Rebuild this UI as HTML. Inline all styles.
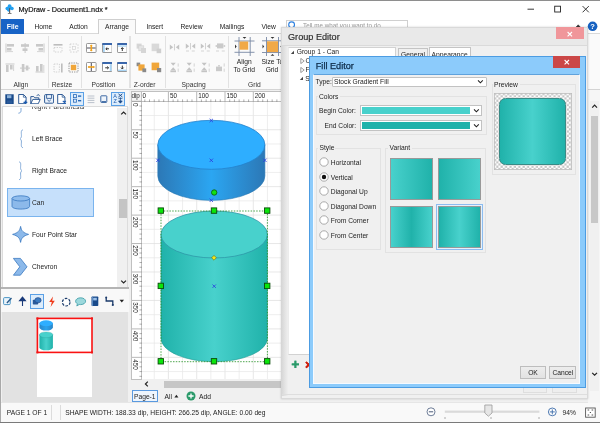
<!DOCTYPE html>
<html><head><meta charset="utf-8"><title>MyDraw</title>
<style>
html,body{margin:0;padding:0;overflow:hidden;}
body{width:600px;height:423px;overflow:hidden;background:#fff;font-family:"Liberation Sans",sans-serif;position:relative;}
div,span,svg{position:absolute;box-sizing:border-box;}
.t{white-space:nowrap;line-height:10px;height:10px;}
#w{left:0;top:0;width:600px;height:423px;overflow:hidden;will-change:transform;opacity:0.999;}
</style></head><body><div id="w">

<div style="left:0px;top:0px;width:600px;height:423px;background:#fff;"></div>
<svg style="left:5.200px;top:3.800px" width="9.200" height="10" viewBox="0 0 11 12">
<circle cx="5.5" cy="2.6" r="2.3" fill="#22a0f0"/><circle cx="2.6" cy="5.4" r="2.1" fill="#22a0f0"/><circle cx="8.4" cy="5.4" r="2.1" fill="#22a0f0"/><circle cx="4.3" cy="7.6" r="1.6" fill="#22a0f0"/><circle cx="5.5" cy="5" r="2" fill="#22a0f0"/>
<rect x="4.900" y="5" width="1.300" height="6" fill="#555"/><rect x="3.400" y="10.800" width="4.400" height="1" fill="#666"/></svg>
<span class="t" style="left:18.5px;top:4.500000000000001px;font-size:7.3px;color:#1a1a1a;-webkit-text-stroke:0.200px #1a1a1a;">MyDraw - Document1.ndx *</span>
<svg style="left:520px;top:0" width="80" height="19" viewBox="0 0 80 19">
<path d="M7.5 9.2h6.5" stroke="#222" stroke-width="0.9" fill="none"/>
<rect x="34.7" y="6.2" width="5.8" height="5.8" stroke="#222" stroke-width="0.9" fill="none"/>
<path d="M62.6 6.1l6.2 6.2M68.8 6.1l-6.2 6.2" stroke="#222" stroke-width="0.9" fill="none"/>
</svg>
<div style="left:1px;top:19px;width:599px;height:15px;background:#fff;"></div>
<div style="left:1px;top:33.4px;width:599px;height:1px;background:#d9d9d9;"></div>
<div style="left:1px;top:19px;width:23.2px;height:15px;background:#1763c6;"></div>
<span class="t" style="left:-87.4px;width:200px;text-align:center;top:22.3px;font-size:6.9px;color:#fff;font-weight:bold;">File</span>
<span class="t" style="left:-56.7px;width:200px;text-align:center;top:22.3px;font-size:6.7px;color:#222;">Home</span>
<span class="t" style="left:-21.5px;width:200px;text-align:center;top:22.3px;font-size:6.7px;color:#222;">Action</span>
<span class="t" style="left:54.80000000000001px;width:200px;text-align:center;top:22.3px;font-size:6.7px;color:#222;">Insert</span>
<span class="t" style="left:91.5px;width:200px;text-align:center;top:22.3px;font-size:6.7px;color:#222;">Review</span>
<span class="t" style="left:132px;width:200px;text-align:center;top:22.3px;font-size:6.7px;color:#222;">Mailings</span>
<span class="t" style="left:168.60000000000002px;width:200px;text-align:center;top:22.3px;font-size:6.7px;color:#222;">View</span>
<div style="left:98.3px;top:19.2px;width:37.6px;height:15.2px;background:#fafafa;border:1px solid #cfcfcf;border-bottom:none;"></div>
<span class="t" style="left:17px;width:200px;text-align:center;top:22.3px;font-size:6.7px;color:#222;">Arrange</span>
<svg style="left:572px;top:20px" width="28" height="14" viewBox="0 0 28 14">
<path d="M4.200 7l2-2.200 2 2.200z" fill="#333" stroke="#333" stroke-width="0.600"/>
<circle cx="20.6" cy="6.3" r="4.8" fill="#1560c0"/>
<text x="20.6" y="9" font-size="7.5" font-weight="bold" fill="#fff" text-anchor="middle" font-family="Liberation Sans">?</text>
</svg>
<div style="left:286px;top:19.6px;width:122px;height:12px;border:1px solid #d0d0d0;background:#fff;"></div>
<svg style="left:287px;top:19px" width="12" height="12" viewBox="0 0 12 12"><circle cx="4.600" cy="5.800" r="2.900" stroke="#2a7fe0" stroke-width="1.100" fill="none"/></svg>
<span class="t" style="left:303px;top:21.3px;font-size:6.3px;color:#999;">Tell me what you want to do...</span>
<div style="left:1px;top:34.4px;width:599px;height:55.3px;background:#fafafa;"></div>
<div style="left:1px;top:89.2px;width:599px;height:1px;background:#d4d4d4;"></div>
<div style="left:47.5px;top:36px;width:1.4px;height:52px;background:#e2e2e2;"></div>
<div style="left:81.1px;top:36px;width:1.4px;height:52px;background:#e2e2e2;"></div>
<div style="left:129.3px;top:36px;width:1.4px;height:52px;background:#e2e2e2;"></div>
<div style="left:164.9px;top:36px;width:1.4px;height:52px;background:#e2e2e2;"></div>
<div style="left:227.9px;top:36px;width:1.4px;height:52px;background:#e2e2e2;"></div>
<span class="t" style="left:-79.2px;width:200px;text-align:center;top:79.9px;font-size:6.7px;color:#333;">Align</span>
<span class="t" style="left:-38px;width:200px;text-align:center;top:79.9px;font-size:6.7px;color:#333;">Resize</span>
<span class="t" style="left:3.5px;width:200px;text-align:center;top:79.9px;font-size:6.7px;color:#333;">Position</span>
<span class="t" style="left:44.599999999999994px;width:200px;text-align:center;top:79.9px;font-size:6.7px;color:#333;">Z-order</span>
<span class="t" style="left:93.69999999999999px;width:200px;text-align:center;top:79.9px;font-size:6.7px;color:#333;">Spacing</span>
<span class="t" style="left:154.3px;width:200px;text-align:center;top:79.9px;font-size:6.7px;color:#333;">Grid</span>
<svg style="left:4.6px;top:42.6px" width="10" height="10" viewBox="0 0 10 10" preserveAspectRatio="none"><rect x="0.5" y="0.5" width="1" height="9" fill="#c9c9c9"/><rect x="2" y="1" width="7" height="2.6" fill="#c9c9c9"/><rect x="2" y="5" width="4.5" height="2.6" fill="#c9c9c9"/><path d="M2 8.6h6" stroke="#c9c9c9" stroke-width="0.8"/></svg>
<svg style="left:4.6px;top:62.8px" width="10" height="10" viewBox="0 0 10 10" preserveAspectRatio="none"><rect x="0.5" y="0.5" width="9" height="1" fill="#c9c9c9"/><rect x="1" y="2" width="2.6" height="7" fill="#c9c9c9"/><rect x="5" y="2" width="2.6" height="4.5" fill="#c9c9c9"/><path d="M8.6 2v6" stroke="#c9c9c9" stroke-width="0.8"/></svg>
<svg style="left:19.8px;top:42.6px" width="10" height="10" viewBox="0 0 10 10" preserveAspectRatio="none"><rect x="4.6" y="0" width="1" height="10" fill="#c9c9c9"/><rect x="1" y="1.2" width="8" height="2.6" fill="#c9c9c9"/><rect x="2.5" y="5.4" width="5" height="2.6" fill="#c9c9c9"/></svg>
<svg style="left:19.8px;top:62.8px" width="10" height="10" viewBox="0 0 10 10" preserveAspectRatio="none"><rect x="0" y="4.6" width="10" height="1" fill="#c9c9c9"/><rect x="1.8" y="1" width="2.6" height="8" fill="#c9c9c9"/><rect x="5.8" y="2.5" width="2.6" height="5" fill="#c9c9c9"/></svg>
<svg style="left:35.2px;top:42.6px" width="10" height="10" viewBox="0 0 10 10" preserveAspectRatio="none"><rect x="8.5" y="0.5" width="1" height="9" fill="#c9c9c9"/><rect x="1" y="1" width="7" height="2.6" fill="#c9c9c9"/><rect x="3.5" y="5" width="4.5" height="2.6" fill="#c9c9c9"/><path d="M2 8.6h6" stroke="#c9c9c9" stroke-width="0.8"/></svg>
<svg style="left:35.2px;top:62.8px" width="10" height="10" viewBox="0 0 10 10" preserveAspectRatio="none"><rect x="0.5" y="8.5" width="9" height="1" fill="#c9c9c9"/><rect x="1" y="3" width="2.6" height="5.5" fill="#c9c9c9"/><rect x="5" y="1" width="2.6" height="7.5" fill="#c9c9c9"/><path d="M8.8 2v6" stroke="#c9c9c9" stroke-width="0.8"/></svg>
<svg style="left:52.5px;top:42.6px" width="10" height="10" viewBox="0 0 10 10" preserveAspectRatio="none"><rect x="0.5" y="1" width="9" height="1.6" fill="#bdbdbd"/><rect x="1" y="4.5" width="8" height="4.5" fill="none" stroke="#c9c9c9" stroke-width="0.8" stroke-dasharray="1.4 1.2"/></svg>
<svg style="left:68.5px;top:42.6px" width="10" height="10" viewBox="0 0 10 10" preserveAspectRatio="none"><rect x="1" y="1" width="8" height="8" fill="none" stroke="#c9c9c9" stroke-width="0.8" stroke-dasharray="1.4 1.4"/><rect x="3.6" y="3.6" width="2.8" height="2.8" fill="none" stroke="#d4d4d4" stroke-width="0.7"/></svg>
<svg style="left:52.5px;top:62.8px" width="10" height="10" viewBox="0 0 10 10" preserveAspectRatio="none"><rect x="8" y="0.5" width="1.6" height="9" fill="#bdbdbd"/><rect x="1" y="1" width="5.4" height="8" fill="none" stroke="#c9c9c9" stroke-width="0.8" stroke-dasharray="1.4 1.2"/></svg>
<svg style="left:68px;top:62.3px" width="11" height="11" viewBox="0 0 11 11" preserveAspectRatio="none"><rect x="1" y="1" width="9" height="9" fill="none" stroke="#777" stroke-width="0.8" stroke-dasharray="1.2 1.1"/><rect x="2.8" y="2.8" width="5.4" height="5.4" fill="#f0a63a"/></svg>
<svg style="left:86.2px;top:42.9px" width="10.6" height="10" viewBox="0 0 10.6 10" preserveAspectRatio="none"><rect x="0.5" y="0.5" width="9.600" height="9" rx="0.800" fill="#fff" stroke="#8c8c8c" stroke-width="0.900"/><path d="M1 5h8.600" stroke="#3a3a4a" stroke-width="0.900"/><rect x="4.500" y="2" width="1.600" height="6" fill="#f2a21c"/><path d="M4 3l1.300-1.600L6.600 3zM4 7l1.300 1.600L6.600 7z" fill="#f2a21c"/></svg>
<svg style="left:86.2px;top:62.2px" width="10.6" height="10" viewBox="0 0 10.6 10" preserveAspectRatio="none"><rect x="0.5" y="0.5" width="9.600" height="9" rx="0.800" fill="#fff" stroke="#8c8c8c" stroke-width="0.900"/><path d="M5.300 1v8" stroke="#3a3a4a" stroke-width="0.900"/><rect x="2.300" y="4.200" width="6" height="1.600" fill="#f2a21c"/><path d="M3.300 3.700L1.700 5l1.600 1.300zM7.300 3.700L8.900 5 7.300 6.300z" fill="#f2a21c"/></svg>
<svg style="left:101.5px;top:42.9px" width="10.6" height="10" viewBox="0 0 10.6 10" preserveAspectRatio="none"><rect x="0.5" y="0.5" width="9.600" height="9" rx="0.600" fill="#fff" stroke="#8c8c8c" stroke-width="0.900"/><rect x="0.300" y="0.200" width="10" height="1.700" fill="#2458a8"/><rect x="1" y="2.200" width="1.800" height="6.800" fill="#a8d4f4"/><path d="M7 5.800H4M5.200 4.500L3.800 5.800 5.200 7.100" stroke="#333" stroke-width="1" fill="none"/></svg>
<svg style="left:116.5px;top:42.9px" width="10.6" height="10" viewBox="0 0 10.6 10" preserveAspectRatio="none"><rect x="0.5" y="0.5" width="9.600" height="9" rx="0.600" fill="#fff" stroke="#8c8c8c" stroke-width="0.900"/><rect x="0.300" y="0.200" width="10" height="1.700" fill="#2458a8"/><rect x="1" y="2.400" width="8.600" height="1.300" fill="#a8d4f4"/><path d="M5.300 8V4.800M4 6L5.300 4.600 6.600 6" stroke="#333" stroke-width="1" fill="none"/></svg>
<svg style="left:101.5px;top:62.2px" width="10.6" height="10" viewBox="0 0 10.6 10" preserveAspectRatio="none"><rect x="0.5" y="0.5" width="9.600" height="9" rx="0.600" fill="#fff" stroke="#8c8c8c" stroke-width="0.900"/><rect x="0.300" y="0.200" width="10" height="1.700" fill="#2458a8"/><rect x="7.800" y="2.200" width="1.800" height="6.800" fill="#a8d4f4"/><path d="M3.200 5.800H6.400M5.200 4.500L6.600 5.800 5.200 7.100" stroke="#333" stroke-width="1" fill="none"/></svg>
<svg style="left:116.5px;top:62.2px" width="10.6" height="10" viewBox="0 0 10.6 10" preserveAspectRatio="none"><rect x="0.5" y="0.5" width="9.600" height="9" rx="0.600" fill="#fff" stroke="#8c8c8c" stroke-width="0.900"/><rect x="0.300" y="0.200" width="10" height="1.700" fill="#2458a8"/><rect x="1" y="7.600" width="8.600" height="1.400" fill="#a8d4f4"/><path d="M5.300 3.600V6.800M4 5.600L5.300 7 6.600 5.600" stroke="#333" stroke-width="1" fill="none"/></svg>
<svg style="left:135.6px;top:42.6px" width="11" height="11" viewBox="0 0 11 11" preserveAspectRatio="none"><rect x="0.6" y="0.6" width="5" height="5" fill="#d6d6d6"/><rect x="2.8" y="2.8" width="5" height="5" fill="#e4e4e4" stroke="#cfcfcf" stroke-width="0.6"/><rect x="5" y="5" width="5" height="5" fill="#d6d6d6"/></svg>
<svg style="left:151.2px;top:42.6px" width="11" height="11" viewBox="0 0 11 11" preserveAspectRatio="none"><rect x="0.6" y="0.6" width="7.6" height="7.6" fill="#d9d9d9"/><rect x="5.6" y="5.6" width="4.6" height="4.6" fill="#cfcfcf"/></svg>
<svg style="left:135.6px;top:62px" width="11" height="11" viewBox="0 0 11 11" preserveAspectRatio="none"><rect x="0.6" y="0.6" width="3.6" height="3.6" fill="#8a8a8a"/><rect x="2.4" y="2.4" width="6.2" height="6.2" fill="#f0a63a"/><rect x="6.4" y="6.4" width="3.8" height="3.8" fill="#8a8a8a"/></svg>
<svg style="left:151.2px;top:62px" width="11" height="11" viewBox="0 0 11 11" preserveAspectRatio="none"><rect x="0.6" y="0.6" width="7.6" height="7.6" fill="#f0a63a"/><rect x="6" y="6" width="4.2" height="4.2" fill="#8a8a8a"/></svg>
<svg style="left:168.9px;top:43.0px" width="11" height="10" viewBox="0 0 11 10" preserveAspectRatio="none"><path d="M0.800 1.600l3.400 2.600-3.400 2.600zM10.200 1.600L6.800 4.200l3.400 2.600z" fill="#c4c4c4"/><path d="M5.500 1v6.400" stroke="#c9c9c9" stroke-width="0.800"/></svg>
<svg style="left:168.9px;top:61.6px" width="11" height="11" viewBox="0 0 11 11" preserveAspectRatio="none"><path d="M1.600 0.800l2.600 3 2.600-3zM1.600 8.200l2.600-3 2.600 3z" fill="#c4c4c4"/><rect x="1.400" y="8.400" width="5.600" height="1.800" fill="#c4c4c4"/><path d="M9.200 1.400v3.200M9.200 6.600v3.200" stroke="#d0d0d0" stroke-width="0.900"/></svg>
<svg style="left:184.5px;top:41.6px" width="11" height="10" viewBox="0 0 11 10" preserveAspectRatio="none"><path d="M0.800 1.600l3.400 2.600-3.400 2.600zM10.200 1.600L6.800 4.200l3.400 2.600z" fill="#c4c4c4"/><path d="M5.500 1v6.400" stroke="#c9c9c9" stroke-width="0.800"/><path d="M1 9h3M6.800 9h3" stroke="#d0d0d0" stroke-width="0.900"/></svg>
<svg style="left:184.5px;top:61.6px" width="11" height="11" viewBox="0 0 11 11" preserveAspectRatio="none"><path d="M1.600 0.800l2.600 3 2.600-3zM1.600 8.200l2.600-3 2.600 3z" fill="#c4c4c4"/><rect x="1.400" y="8.400" width="5.600" height="1.800" fill="#c4c4c4"/><path d="M9.200 1.400v3.200M9.200 6.600v3.200" stroke="#d0d0d0" stroke-width="0.900"/></svg>
<svg style="left:199.5px;top:41.6px" width="11" height="10" viewBox="0 0 11 10" preserveAspectRatio="none"><path d="M0.800 1.600l3.400 2.600-3.400 2.600zM10.200 1.600L6.800 4.200l3.400 2.600z" fill="#c4c4c4"/><path d="M5.500 1v6.400" stroke="#c9c9c9" stroke-width="0.800"/><path d="M1 9h3M6.800 9h3" stroke="#d0d0d0" stroke-width="0.900"/></svg>
<svg style="left:199.5px;top:61.6px" width="11" height="11" viewBox="0 0 11 11" preserveAspectRatio="none"><path d="M1.600 0.800l2.600 3 2.600-3zM1.600 8.200l2.600-3 2.600 3z" fill="#c4c4c4"/><rect x="1.400" y="8.400" width="5.600" height="1.800" fill="#c4c4c4"/><path d="M9.200 1.400v3.200M9.200 6.600v3.200" stroke="#d0d0d0" stroke-width="0.900"/></svg>
<svg style="left:215.0px;top:41.6px" width="11" height="10" viewBox="0 0 11 10" preserveAspectRatio="none"><rect x="2" y="1.400" width="6.400" height="5" fill="#cacaca"/><path d="M0.600 4h1.400M8.600 4h1.600" stroke="#c4c4c4" stroke-width="1.400"/><path d="M1 9h3M6.800 9h3" stroke="#d0d0d0" stroke-width="0.900"/></svg>
<svg style="left:215.0px;top:61.6px" width="11" height="11" viewBox="0 0 11 11" preserveAspectRatio="none"><rect x="1" y="4.600" width="6" height="4.600" fill="#cacaca"/><path d="M4 3v1.600" stroke="#c4c4c4" stroke-width="1.400"/><path d="M9.200 1.400v3.200M9.200 6.600v3.200" stroke="#d0d0d0" stroke-width="0.900"/></svg>
<svg style="left:0px;top:0px" width="290" height="60" viewBox="0 0 290 60" preserveAspectRatio="none"><path d="M239 37v19M250.200 37v19M234.500 41h20M234.500 52.300h20" stroke="#7888a4" stroke-width="0.900"/><rect x="239.500" y="41.500" width="8.700" height="8.200" fill="#f1a947"/><path d="M242.600 37h3.800l-1.900 1.700zM235 44.600l1.700 1.900-1.700 1.900z" fill="#333"/><path d="M266.500 37v19M278.500 37v19M262 40.800h21M262 52.500h21" stroke="#7888a4" stroke-width="0.900"/><rect x="267" y="41.300" width="11" height="10.800" fill="#f1a947"/><path d="M270.600 37h3.800l-1.900 1.700zM262.500 44.600l1.700 1.900-1.700 1.900zM270.600 55.800h3.800l-1.900-1.700zM282 44.600l-1.700 1.900 1.700 1.900z" fill="#333"/></svg>
<span class="t" style="left:144.2px;width:200px;text-align:center;top:56.900000000000006px;font-size:6.7px;color:#222;">Align</span>
<span class="t" style="left:144.2px;width:200px;text-align:center;top:64.9px;font-size:6.7px;color:#222;">To Grid</span>
<span class="t" style="left:172.39999999999998px;width:200px;text-align:center;top:56.900000000000006px;font-size:6.7px;color:#222;">Size To</span>
<span class="t" style="left:172px;width:200px;text-align:center;top:64.9px;font-size:6.7px;color:#222;">Grid</span>
<div style="left:1px;top:90px;width:599px;height:313px;background:#f0f0f0;"></div>
<div style="left:1px;top:90px;width:128px;height:17px;background:#f8f8f8;"></div>
<svg style="left:4.6px;top:93.6px" width="9" height="10.4" viewBox="0 0 9 10.4" preserveAspectRatio="none"><rect x="0.3" y="0.3" width="8.4" height="9.8" fill="#1a4a8a"/><rect x="2" y="1.2" width="4.4" height="3" fill="#8ab0d8"/><rect x="1.8" y="6.4" width="5.4" height="3.2" fill="#2a5a9a"/></svg>
<svg style="left:17.8px;top:93.6px" width="10" height="10.6" viewBox="0 0 10 10.6" preserveAspectRatio="none"><path d="M0.7 0.5h4.8l2.6 2.6v6.6H0.7z" fill="#fff" stroke="#1a4a8a" stroke-width="0.9"/><path d="M5.4 0.6v2.6h2.6" fill="none" stroke="#1a4a8a" stroke-width="0.7"/><path d="M7.4 6.4v3.8M5.5 8.3h3.8" stroke="#1a5ab0" stroke-width="1.2"/></svg>
<svg style="left:30.4px;top:93.6px" width="11" height="10.6" viewBox="0 0 11 10.6" preserveAspectRatio="none"><path d="M0.8 9.8V2.6h3l1 1.2h4v1.6" fill="none" stroke="#1a4a8a" stroke-width="0.9"/><path d="M0.8 9.8l2-4.4h7.4l-2 4.4z" fill="#fff" stroke="#1a4a8a" stroke-width="0.9"/><path d="M6.6 1.6l2-1 1 1.6" stroke="#1a4a8a" stroke-width="0.8" fill="none"/></svg>
<svg style="left:44px;top:93.8px" width="10.4" height="10" viewBox="0 0 10.4 10" preserveAspectRatio="none"><rect x="0.6" y="0.6" width="9" height="8.6" rx="1" fill="#eaf2fb" stroke="#1a4a8a" stroke-width="0.9"/><path d="M2.6 0.8v3.6h5V0.8" fill="none" stroke="#1a4a8a" stroke-width="0.8"/><path d="M3.4 5.8l1.7 1.6 1.7-1.6" fill="none" stroke="#1a4a8a" stroke-width="0.8"/></svg>
<svg style="left:57px;top:93.6px" width="10" height="10.6" viewBox="0 0 10 10.6" preserveAspectRatio="none"><path d="M0.7 0.5h4.6l2.6 2.6v6.6H0.7z" fill="#fff" stroke="#1a4a8a" stroke-width="0.9"/><path d="M5.2 0.6v2.6h2.6" fill="none" stroke="#1a4a8a" stroke-width="0.7"/><path d="M5.8 6.8l3 3M8.8 6.8l-3 3" stroke="#1a5ab0" stroke-width="1.1"/></svg>
<div style="left:70px;top:91.6px;width:13.6px;height:14.4px;background:#dcecfb;border:1px solid #5aa0e6;"></div>
<svg style="left:72.6px;top:94.4px" width="9" height="9" viewBox="0 0 9 9" preserveAspectRatio="none"><rect x="0.5" y="0.6" width="3" height="3" fill="none" stroke="#2a6ab8" stroke-width="0.8"/><rect x="0.5" y="5.2" width="3" height="3" fill="none" stroke="#2a6ab8" stroke-width="0.8"/><rect x="5" y="1.4" width="3.2" height="1.4" fill="#2a6ab8"/><rect x="5" y="6" width="3.2" height="1.4" fill="#2a6ab8"/></svg>
<svg style="left:86.6px;top:94.6px" width="8" height="9" viewBox="0 0 8 9" preserveAspectRatio="none"><path d="M0.6 1h6.8M0.6 3.200h6.800M0.600 5.400h6.800M0.600 7.600h6.800" stroke="#aab2c0" stroke-width="0.800"/></svg>
<svg style="left:100px;top:94.6px" width="8" height="9" viewBox="0 0 8 9" preserveAspectRatio="none"><rect x="0.8" y="0.8" width="6" height="6.6" rx="0.6" fill="#eef4fb" stroke="#2a5a9a" stroke-width="0.9"/><rect x="1.6" y="6.2" width="4.4" height="1" fill="#2a5a9a"/></svg>
<div style="left:110.8px;top:91.6px;width:14.2px;height:14.4px;background:#dcecfb;border:1px solid #5aa0e6;"></div>
<svg style="left:112.8px;top:93.2px" width="11" height="11.5" viewBox="0 0 11 11.5" preserveAspectRatio="none"><text x="0.2" y="4.8" font-size="5.4" fill="#1a5ab0" font-family="Liberation Sans">A</text><text x="0.4" y="10.4" font-size="5.4" fill="#1a5ab0" font-family="Liberation Sans">Z</text><path d="M5.4 0.8l4 3.2M9.4 0.8l-4 3.2" stroke="#1a4a8a" stroke-width="0.9"/><path d="M7.4 4.4v5.6M5.6 8l1.8 2.2L9.2 8z" stroke="#1a4a8a" stroke-width="0.8" fill="#1a4a8a"/><path d="M5.4 5.4h4" stroke="#1a4a8a" stroke-width="0.7"/></svg>
<div style="left:2px;top:106.4px;width:126.4px;height:181.8px;background:#fff;border:1px solid #dcdcdc;"></div>
<div style="left:117.2px;top:108px;width:10.2px;height:179px;background:#f0f0f0;"></div>
<div style="left:118.6px;top:199.3px;width:8.4px;height:19px;background:#c4c4c4;"></div>
<svg style="left:118.6px;top:108.6px" width="9" height="8" viewBox="0 0 9 8" preserveAspectRatio="none"><path d="M2.2 5.4l2.4-2.4 2.4 2.4" stroke="#222" stroke-width="1.2" fill="none"/></svg>
<svg style="left:118.6px;top:278px" width="9" height="8" viewBox="0 0 9 8" preserveAspectRatio="none"><path d="M2.2 2.6l2.4 2.4 2.4-2.4" stroke="#222" stroke-width="1.2" fill="none"/></svg>
<svg style="left:16px;top:107.6px" width="8" height="8" viewBox="0 0 8 8" preserveAspectRatio="none"><path d="M5 0v2.6c0 2-1.2 2.4-2.6 2.6" stroke="#6a9ad0" stroke-width="0.9" fill="none"/></svg>
<div style="left:30px;top:107.2px;width:60px;height:5px;overflow:hidden;"><span class="t" style="left:1.500px;top:-5px;font-size:6.700px;color:#333">Right Parenthesis</span></div>
<svg style="left:17.6px;top:128.6px" width="8" height="20" viewBox="0 0 8 25" preserveAspectRatio="none"><path d="M5 1c-2.6 0.4-1.4 5-1.6 8.4-0.1 1.8-1.4 2.8-1.4 2.8s1.3 1 1.400 2.800c0.2 3.400-1 8 1.600 8.400" stroke="#6a9ad0" stroke-width="0.9" fill="none"/></svg>
<span class="t" style="left:32px;top:134.0px;font-size:6.7px;color:#222;">Left Brace</span>
<svg style="left:17px;top:160.6px" width="8" height="20" viewBox="0 0 8 25" preserveAspectRatio="none"><path d="M2 1c2.600 0.400 1.400 5 1.600 8.400 0.100 1.800 1.400 2.800 1.400 2.800s-1.300 1-1.400 2.800c-0.200 3.400 1 8-1.600 8.400" stroke="#6a9ad0" stroke-width="0.9" fill="none"/></svg>
<span class="t" style="left:32px;top:166.0px;font-size:6.7px;color:#222;">Right Brace</span>
<div style="left:7px;top:187.6px;width:87px;height:29.6px;background:#c6e0fb;border:1px solid #7ab4ee;"></div>
<svg style="left:11px;top:195px" width="20" height="15" viewBox="0 0 20 15" preserveAspectRatio="none"><path d="M1 3.400v8c0 1.500 4 2.700 8.800 2.700s8.800-1.200 8.800-2.700v-8" fill="#8cb9ea" stroke="#3a78c0" stroke-width="0.8"/><ellipse cx="9.800" cy="3.400" rx="8.800" ry="2.600" fill="#8fbcec" stroke="#3a78c0" stroke-width="0.8"/></svg>
<span class="t" style="left:32px;top:198.0px;font-size:6.7px;color:#222;">Can</span>
<svg style="left:11px;top:225px" width="20" height="20" viewBox="0 0 20 20" preserveAspectRatio="none"><path d="M9.600 1.400c0.800 4.600 2.600 6.400 8 8-5.400 1.600-7.200 3.400-8 8-0.800-4.600-2.600-6.400-8-8 5.400-1.600 7.200-3.400 8-8z" fill="#8cb9ea" stroke="#3a78c0" stroke-width="0.8"/></svg>
<span class="t" style="left:32px;top:230.0px;font-size:6.7px;color:#222;">Four Point Star</span>
<svg style="left:12px;top:256.5px" width="17" height="20" viewBox="0 0 17 20" preserveAspectRatio="none"><path d="M1.400 1.400h7l6.600 8.400-6.600 8.400h-7l6.400-8.400z" fill="#8cb9ea" stroke="#3a78c0" stroke-width="0.8"/></svg>
<span class="t" style="left:32px;top:262.09999999999997px;font-size:6.7px;color:#222;">Chevron</span>
<div style="left:1px;top:288.7px;width:128px;height:23px;background:#f8f8f8;"></div>
<div style="left:1px;top:287.3px;width:128px;height:1.4px;background:#b4b4b4;"></div>
<svg style="left:3px;top:296px" width="10" height="10" viewBox="0 0 10 10" preserveAspectRatio="none"><rect x="0.6" y="1.6" width="6.600" height="7" rx="1" fill="#eaf4fb" stroke="#3a8ac0" stroke-width="0.9"/><path d="M3.400 6.600l4.600-5 1 1-4.600 5z" fill="#2a5a8a"/></svg>
<svg style="left:17.5px;top:295.5px" width="9" height="11" viewBox="0 0 9 11" preserveAspectRatio="none"><path d="M4.500 10V2M1.600 4.600l2.900-3.400 2.900 3.400z" stroke="#1a3a7a" stroke-width="1.100" fill="#1a3a7a"/></svg>
<div style="left:30.4px;top:294.4px;width:13.2px;height:14.4px;background:#dcecfb;border:1px solid #5aa0e6;"></div>
<svg style="left:32.4px;top:297px" width="10" height="9" viewBox="0 0 10 9" preserveAspectRatio="none"><rect x="0.800" y="2.800" width="5.400" height="4.800" rx="0.800" fill="#2a5a9a"/><ellipse cx="6" cy="3.200" rx="3.200" ry="2.600" fill="#3a7ac0" stroke="#1a3a7a" stroke-width="0.500"/></svg>
<svg style="left:47.5px;top:295.5px" width="8" height="12" viewBox="0 0 8 12" preserveAspectRatio="none"><path d="M5 0.500L1.200 6h2.600L2.600 11 6.800 4.800H4.200z" fill="#f03a1a"/></svg>
<svg style="left:61px;top:296.5px" width="11" height="11" viewBox="0 0 11 11" preserveAspectRatio="none"><circle cx="5.200" cy="5.200" r="3.800" fill="#fff" stroke="#1a3a6a" stroke-width="1.200" stroke-dasharray="2.600 1.400"/></svg>
<svg style="left:75px;top:296.5px" width="12" height="10" viewBox="0 0 12 10" preserveAspectRatio="none"><path d="M5.600 0.800c2.800 0 5 1.500 5 3.400s-2.200 3.400-5 3.400c-0.500 0-1 0-1.400-0.100L1.800 9l0.600-2.200C1.300 6.200 0.600 5.300 0.600 4.200c0-1.900 2.200-3.400 5-3.400z" fill="#9cd8dc" stroke="#3a9aa6" stroke-width="0.800"/></svg>
<svg style="left:90.6px;top:295.8px" width="8" height="11" viewBox="0 0 8 11" preserveAspectRatio="none"><rect x="0.500" y="0.500" width="6.800" height="9.600" rx="0.800" fill="#1a4a8a"/><rect x="2.200" y="1.800" width="3.600" height="2.600" fill="#9cc0e8"/><rect x="1.200" y="0.500" width="0.800" height="9.600" fill="#6a9ad0"/></svg>
<svg style="left:104.6px;top:296px" width="11" height="11" viewBox="0 0 11 11" preserveAspectRatio="none"><path d="M1.200 1.400v3.600h6.600v4" stroke="#1a3a6a" stroke-width="1.300" fill="none"/><circle cx="7.800" cy="9" r="1.100" fill="#1a3a6a"/><circle cx="1.200" cy="1.400" r="1" fill="#1a3a6a"/></svg>
<svg style="left:119.4px;top:299px" width="6" height="5" viewBox="0 0 6 5" preserveAspectRatio="none"><path d="M0.600 0.800h4.400L2.800 3.600z" fill="#222"/></svg>
<div style="left:2px;top:311.6px;width:126.4px;height:90px;background:#e2e2e2;"></div>
<div style="left:37px;top:317.8px;width:55px;height:79.2px;background:#fff;"></div>
<svg style="left:36px;top:317px" width="58" height="37" viewBox="0 0 58 37" preserveAspectRatio="none"><defs><linearGradient id="mt" x1="0" x2="1"><stop offset="0" stop-color="#20b2aa"/><stop offset="0.500" stop-color="#48d1cc"/><stop offset="1" stop-color="#20b2aa"/></linearGradient>
<linearGradient id="mb" x1="0" x2="1"><stop offset="0" stop-color="#2a86c8"/><stop offset="0.500" stop-color="#2ba4ee"/><stop offset="1" stop-color="#2a86c8"/></linearGradient></defs>
<path d="M3.400 6.200v4.400a6.750 2.900 0 0 0 13.500 0v-4.400z" fill="url(#mb)"/><ellipse cx="10.150" cy="6.200" rx="6.750" ry="2.900" fill="#2eaeff"/>
<path d="M3.400 17.800v12.600a6.750 2.900 0 0 0 13.500 0V17.800z" fill="url(#mt)"/><ellipse cx="10.150" cy="17.800" rx="6.750" ry="2.900" fill="#48d1cc" stroke="#2a9a94" stroke-width="0.300"/>
<rect x="1.400" y="1.400" width="54.600" height="34" fill="none" stroke="#fa1212" stroke-width="1.600"/>
<rect x="0.400" y="0.400" width="2" height="2" fill="#f01818"/><rect x="55" y="0.400" width="2" height="2" fill="#f01818"/><rect x="0.400" y="34.400" width="2" height="2" fill="#f01818"/><rect x="55" y="34.400" width="2" height="2" fill="#f01818"/></svg>
<div style="left:0px;top:401.6px;width:600px;height:21.4px;background:#f9f9f9;border-top:1px solid #e6e6e6;"></div>
<div style="left:51px;top:405px;width:1px;height:15px;background:#dcdcdc;"></div>
<div style="left:59.6px;top:405px;width:1px;height:15px;background:#dcdcdc;"></div>
<span class="t" style="left:6.8px;top:408.3px;font-size:6.7px;color:#222;">PAGE 1 OF 1</span>
<span class="t" style="left:65.2px;top:408.3px;font-size:6.7px;color:#222;">SHAPE WIDTH: 188.33 dip, HEIGHT: 266.25 dip, ANGLE: 0.00 deg</span>
<svg style="left:425px;top:404px" width="175" height="16" viewBox="0 0 175 16" preserveAspectRatio="none"><circle cx="6" cy="7.800" r="4" fill="#fff" stroke="#5f6f8c" stroke-width="0.900"/><path d="M3.800 7.800h4.400" stroke="#4a5a78" stroke-width="1"/>
<rect x="19.800" y="6.600" width="94.600" height="2.200" fill="#dadada"/>
<path d="M59.800 1h7.200v8l-3.600 3.200-3.600-3.200z" fill="#e6e6e6" stroke="#9a9a9a" stroke-width="0.800"/>
<path d="M20 13v2M66 13v2M114 13v2" stroke="#999" stroke-width="0.800"/>
<circle cx="127.300" cy="7.900" r="3.900" fill="#fff" stroke="#3a6aa8" stroke-width="0.900"/><path d="M124.800 7.900h5M127.300 5.400v5" stroke="#3a6aa8" stroke-width="0.900"/>
<rect x="160.600" y="4" width="9.600" height="9.200" fill="#fff" stroke="#555" stroke-width="0.900"/><path d="M162.600 6h1.600M166.600 6h1.600M162.600 11h1.600M166.600 11h1.600M164.800 8.500h1.200" stroke="#555" stroke-width="1"/></svg>
<span class="t" style="left:562.6px;top:408.09999999999997px;font-size:6.7px;color:#222;">94%</span>
<div style="left:0px;top:0px;width:600px;height:1px;background:#8e8e8e;"></div>
<div style="left:0px;top:0px;width:1px;height:423px;background:#a8a8a8;"></div>
<div style="left:0px;top:421.6px;width:600px;height:1.4px;background:#7a7a7a;"></div>
<div style="left:141px;top:101px;width:141px;height:278.4px;background:#fff;"></div>
<svg style="left:141px;top:101px" width="142" height="278.4" viewBox="0 0 142 278.4" preserveAspectRatio="none"><path d="M13.25 0v279" stroke="#e6e6e6" stroke-width="0.700"/><path d="M27.40 0v279" stroke="#dddddd" stroke-width="0.700"/><path d="M41.55 0v279" stroke="#e6e6e6" stroke-width="0.700"/><path d="M55.70 0v279" stroke="#dddddd" stroke-width="0.700"/><path d="M69.85 0v279" stroke="#e6e6e6" stroke-width="0.700"/><path d="M84.00 0v279" stroke="#dddddd" stroke-width="0.700"/><path d="M98.15 0v279" stroke="#e6e6e6" stroke-width="0.700"/><path d="M112.30 0v279" stroke="#dddddd" stroke-width="0.700"/><path d="M126.45 0v279" stroke="#e6e6e6" stroke-width="0.700"/><path d="M140.60 0v279" stroke="#dddddd" stroke-width="0.700"/><path d="M0 14.52h142" stroke="#e6e6e6" stroke-width="0.700"/><path d="M0 28.75h142" stroke="#dddddd" stroke-width="0.700"/><path d="M0 42.97h142" stroke="#e6e6e6" stroke-width="0.700"/><path d="M0 57.20h142" stroke="#dddddd" stroke-width="0.700"/><path d="M0 71.43h142" stroke="#e6e6e6" stroke-width="0.700"/><path d="M0 85.65h142" stroke="#dddddd" stroke-width="0.700"/><path d="M0 99.88h142" stroke="#e6e6e6" stroke-width="0.700"/><path d="M0 114.10h142" stroke="#dddddd" stroke-width="0.700"/><path d="M0 128.32h142" stroke="#e6e6e6" stroke-width="0.700"/><path d="M0 142.55h142" stroke="#dddddd" stroke-width="0.700"/><path d="M0 156.77h142" stroke="#e6e6e6" stroke-width="0.700"/><path d="M0 171.00h142" stroke="#dddddd" stroke-width="0.700"/><path d="M0 185.22h142" stroke="#e6e6e6" stroke-width="0.700"/><path d="M0 199.45h142" stroke="#dddddd" stroke-width="0.700"/><path d="M0 213.68h142" stroke="#e6e6e6" stroke-width="0.700"/><path d="M0 227.90h142" stroke="#dddddd" stroke-width="0.700"/><path d="M0 242.12h142" stroke="#e6e6e6" stroke-width="0.700"/><path d="M0 256.35h142" stroke="#dddddd" stroke-width="0.700"/><path d="M0 270.57h142" stroke="#e6e6e6" stroke-width="0.700"/></svg>
<div style="left:130.8px;top:90.8px;width:152px;height:11.2px;background:#fff;border:1px solid #c0c0c0;"></div>
<div style="left:130.8px;top:90.8px;width:11px;height:288.8px;background:#fff;border:1px solid #c0c0c0;"></div>
<div style="left:130.8px;top:90.8px;width:11px;height:11.2px;background:#f4f4f4;border:1px solid #c0c0c0;"></div>
<span class="t" style="left:131.4px;top:91.3px;font-size:6.3px;color:#222;">dip</span>
<svg style="left:131px;top:90.8px" width="152" height="11.2" viewBox="0 0 152 11.2" preserveAspectRatio="none"><text x="11.60" y="6.800" font-size="6.300" fill="#222" font-family="Liberation Sans">0</text><path d="M13.82 8.400v2.600" stroke="#7a7a7a" stroke-width="0.600"/><path d="M18.53 8.400v2.600" stroke="#7a7a7a" stroke-width="0.600"/><path d="M23.25 8.400v2.600" stroke="#7a7a7a" stroke-width="0.600"/><path d="M27.97 8.400v2.600" stroke="#7a7a7a" stroke-width="0.600"/><path d="M32.68 8.400v2.600" stroke="#7a7a7a" stroke-width="0.600"/><path d="M37.40 1v10" stroke="#9a9a9a" stroke-width="0.700"/><text x="38.90" y="6.800" font-size="6.300" fill="#222" font-family="Liberation Sans">50</text><path d="M42.12 8.400v2.600" stroke="#7a7a7a" stroke-width="0.600"/><path d="M46.83 8.400v2.600" stroke="#7a7a7a" stroke-width="0.600"/><path d="M51.55 8.400v2.600" stroke="#7a7a7a" stroke-width="0.600"/><path d="M56.27 8.400v2.600" stroke="#7a7a7a" stroke-width="0.600"/><path d="M60.98 8.400v2.600" stroke="#7a7a7a" stroke-width="0.600"/><path d="M65.70 1v10" stroke="#9a9a9a" stroke-width="0.700"/><text x="67.20" y="6.800" font-size="6.300" fill="#222" font-family="Liberation Sans">100</text><path d="M70.42 8.400v2.600" stroke="#7a7a7a" stroke-width="0.600"/><path d="M75.13 8.400v2.600" stroke="#7a7a7a" stroke-width="0.600"/><path d="M79.85 8.400v2.600" stroke="#7a7a7a" stroke-width="0.600"/><path d="M84.57 8.400v2.600" stroke="#7a7a7a" stroke-width="0.600"/><path d="M89.28 8.400v2.600" stroke="#7a7a7a" stroke-width="0.600"/><path d="M94.00 1v10" stroke="#9a9a9a" stroke-width="0.700"/><text x="95.50" y="6.800" font-size="6.300" fill="#222" font-family="Liberation Sans">150</text><path d="M98.72 8.400v2.600" stroke="#7a7a7a" stroke-width="0.600"/><path d="M103.43 8.400v2.600" stroke="#7a7a7a" stroke-width="0.600"/><path d="M108.15 8.400v2.600" stroke="#7a7a7a" stroke-width="0.600"/><path d="M112.87 8.400v2.600" stroke="#7a7a7a" stroke-width="0.600"/><path d="M117.58 8.400v2.600" stroke="#7a7a7a" stroke-width="0.600"/><path d="M122.30 1v10" stroke="#9a9a9a" stroke-width="0.700"/><text x="123.80" y="6.800" font-size="6.300" fill="#222" font-family="Liberation Sans">200</text><path d="M127.02 8.400v2.600" stroke="#7a7a7a" stroke-width="0.600"/><path d="M131.73 8.400v2.600" stroke="#7a7a7a" stroke-width="0.600"/><path d="M136.45 8.400v2.600" stroke="#7a7a7a" stroke-width="0.600"/><path d="M141.17 8.400v2.600" stroke="#7a7a7a" stroke-width="0.600"/><path d="M145.88 8.400v2.600" stroke="#7a7a7a" stroke-width="0.600"/><path d="M150.60 1v10" stroke="#9a9a9a" stroke-width="0.700"/><text x="152.10" y="6.800" font-size="6.300" fill="#222" font-family="Liberation Sans">250</text></svg>
<svg style="left:130.8px;top:91px" width="11" height="288.6" viewBox="0 0 11 288.6" preserveAspectRatio="none"><path d="M1 10.30h10" stroke="#9a9a9a" stroke-width="0.700"/><text transform="translate(2.200 12.10) rotate(90)" font-size="6.300" fill="#222" font-family="Liberation Sans">0</text><path d="M8.400 15.04h2.600" stroke="#7a7a7a" stroke-width="0.600"/><path d="M8.400 19.78h2.600" stroke="#7a7a7a" stroke-width="0.600"/><path d="M8.400 24.52h2.600" stroke="#7a7a7a" stroke-width="0.600"/><path d="M8.400 29.27h2.600" stroke="#7a7a7a" stroke-width="0.600"/><path d="M8.400 34.01h2.600" stroke="#7a7a7a" stroke-width="0.600"/><path d="M1 38.75h10" stroke="#9a9a9a" stroke-width="0.700"/><text transform="translate(2.200 40.55) rotate(90)" font-size="6.300" fill="#222" font-family="Liberation Sans">50</text><path d="M8.400 43.49h2.600" stroke="#7a7a7a" stroke-width="0.600"/><path d="M8.400 48.23h2.600" stroke="#7a7a7a" stroke-width="0.600"/><path d="M8.400 52.97h2.600" stroke="#7a7a7a" stroke-width="0.600"/><path d="M8.400 57.72h2.600" stroke="#7a7a7a" stroke-width="0.600"/><path d="M8.400 62.46h2.600" stroke="#7a7a7a" stroke-width="0.600"/><path d="M1 67.20h10" stroke="#9a9a9a" stroke-width="0.700"/><text transform="translate(2.200 69.00) rotate(90)" font-size="6.300" fill="#222" font-family="Liberation Sans">100</text><path d="M8.400 71.94h2.600" stroke="#7a7a7a" stroke-width="0.600"/><path d="M8.400 76.68h2.600" stroke="#7a7a7a" stroke-width="0.600"/><path d="M8.400 81.43h2.600" stroke="#7a7a7a" stroke-width="0.600"/><path d="M8.400 86.17h2.600" stroke="#7a7a7a" stroke-width="0.600"/><path d="M8.400 90.91h2.600" stroke="#7a7a7a" stroke-width="0.600"/><path d="M1 95.65h10" stroke="#9a9a9a" stroke-width="0.700"/><text transform="translate(2.200 97.45) rotate(90)" font-size="6.300" fill="#222" font-family="Liberation Sans">150</text><path d="M8.400 100.39h2.600" stroke="#7a7a7a" stroke-width="0.600"/><path d="M8.400 105.13h2.600" stroke="#7a7a7a" stroke-width="0.600"/><path d="M8.400 109.88h2.600" stroke="#7a7a7a" stroke-width="0.600"/><path d="M8.400 114.62h2.600" stroke="#7a7a7a" stroke-width="0.600"/><path d="M8.400 119.36h2.600" stroke="#7a7a7a" stroke-width="0.600"/><path d="M1 124.10h10" stroke="#9a9a9a" stroke-width="0.700"/><text transform="translate(2.200 125.90) rotate(90)" font-size="6.300" fill="#222" font-family="Liberation Sans">200</text><path d="M8.400 128.84h2.600" stroke="#7a7a7a" stroke-width="0.600"/><path d="M8.400 133.58h2.600" stroke="#7a7a7a" stroke-width="0.600"/><path d="M8.400 138.32h2.600" stroke="#7a7a7a" stroke-width="0.600"/><path d="M8.400 143.07h2.600" stroke="#7a7a7a" stroke-width="0.600"/><path d="M8.400 147.81h2.600" stroke="#7a7a7a" stroke-width="0.600"/><path d="M1 152.55h10" stroke="#9a9a9a" stroke-width="0.700"/><text transform="translate(2.200 154.35) rotate(90)" font-size="6.300" fill="#222" font-family="Liberation Sans">250</text><path d="M8.400 157.29h2.600" stroke="#7a7a7a" stroke-width="0.600"/><path d="M8.400 162.03h2.600" stroke="#7a7a7a" stroke-width="0.600"/><path d="M8.400 166.77h2.600" stroke="#7a7a7a" stroke-width="0.600"/><path d="M8.400 171.52h2.600" stroke="#7a7a7a" stroke-width="0.600"/><path d="M8.400 176.26h2.600" stroke="#7a7a7a" stroke-width="0.600"/><path d="M1 181.00h10" stroke="#9a9a9a" stroke-width="0.700"/><text transform="translate(2.200 182.80) rotate(90)" font-size="6.300" fill="#222" font-family="Liberation Sans">300</text><path d="M8.400 185.74h2.600" stroke="#7a7a7a" stroke-width="0.600"/><path d="M8.400 190.48h2.600" stroke="#7a7a7a" stroke-width="0.600"/><path d="M8.400 195.22h2.600" stroke="#7a7a7a" stroke-width="0.600"/><path d="M8.400 199.97h2.600" stroke="#7a7a7a" stroke-width="0.600"/><path d="M8.400 204.71h2.600" stroke="#7a7a7a" stroke-width="0.600"/><path d="M1 209.45h10" stroke="#9a9a9a" stroke-width="0.700"/><text transform="translate(2.200 211.25) rotate(90)" font-size="6.300" fill="#222" font-family="Liberation Sans">350</text><path d="M8.400 214.19h2.600" stroke="#7a7a7a" stroke-width="0.600"/><path d="M8.400 218.93h2.600" stroke="#7a7a7a" stroke-width="0.600"/><path d="M8.400 223.68h2.600" stroke="#7a7a7a" stroke-width="0.600"/><path d="M8.400 228.42h2.600" stroke="#7a7a7a" stroke-width="0.600"/><path d="M8.400 233.16h2.600" stroke="#7a7a7a" stroke-width="0.600"/><path d="M1 237.90h10" stroke="#9a9a9a" stroke-width="0.700"/><text transform="translate(2.200 239.70) rotate(90)" font-size="6.300" fill="#222" font-family="Liberation Sans">400</text><path d="M8.400 242.64h2.600" stroke="#7a7a7a" stroke-width="0.600"/><path d="M8.400 247.38h2.600" stroke="#7a7a7a" stroke-width="0.600"/><path d="M8.400 252.12h2.600" stroke="#7a7a7a" stroke-width="0.600"/><path d="M8.400 256.87h2.600" stroke="#7a7a7a" stroke-width="0.600"/><path d="M8.400 261.61h2.600" stroke="#7a7a7a" stroke-width="0.600"/><path d="M1 266.35h10" stroke="#9a9a9a" stroke-width="0.700"/><text transform="translate(2.200 268.15) rotate(90)" font-size="6.300" fill="#222" font-family="Liberation Sans">450</text><path d="M8.400 271.09h2.600" stroke="#7a7a7a" stroke-width="0.600"/><path d="M8.400 275.83h2.600" stroke="#7a7a7a" stroke-width="0.600"/><path d="M8.400 280.57h2.600" stroke="#7a7a7a" stroke-width="0.600"/><path d="M8.400 285.32h2.600" stroke="#7a7a7a" stroke-width="0.600"/></svg>
<svg style="left:0;top:0" width="600" height="423" viewBox="0 0 600 423"><defs>
<linearGradient id="gt" x1="0" x2="1"><stop offset="0" stop-color="#20b2aa"/><stop offset="0.500" stop-color="#48d1cc"/><stop offset="1" stop-color="#20b2aa"/></linearGradient>
<linearGradient id="gb" x1="0" x2="1"><stop offset="0" stop-color="#2c78b6"/><stop offset="0.500" stop-color="#2ba6f2"/><stop offset="1" stop-color="#2c78b6"/></linearGradient>
</defs>
<!-- blue can: bbox x157.8-264.9 y120.3-200.4 -->
<path d="M157.800 144.800V175.900A53.550 24.500 0 0 0 264.900 175.900V144.800z" fill="url(#gb)" stroke="#2a78b4" stroke-width="0.600"/>
<ellipse cx="211.350" cy="144.800" rx="53.550" ry="24.500" fill="#2eaeff" stroke="#2482cc" stroke-width="0.800"/>
<!-- teal can: bbox x161-267.4 y211-361.7 -->
<path d="M161 234.500V338.200A53.200 23.500 0 0 0 267.400 338.200V234.500z" fill="url(#gt)" stroke="#239a93" stroke-width="0.600"/>
<ellipse cx="214.200" cy="234.500" rx="53.200" ry="23.500" fill="#48d1cc" stroke="#2f98a8" stroke-width="0.800"/>
<rect x="161" y="211" width="106.400" height="150.700" fill="none" stroke="#1f8f1f" stroke-width="0.800" stroke-dasharray="1.500 1.300"/>
<path d="M209.60000000000002 118.8l3.400 3.400M213.0 118.8l-3.400 3.400" stroke="#2a3ae0" stroke-width="0.800"/><path d="M209.60000000000002 158.60000000000002l3.400 3.400M213.0 158.60000000000002l-3.400 3.400" stroke="#2a3ae0" stroke-width="0.800"/><path d="M156.20000000000002 158.60000000000002l3.400 3.400M159.6 158.60000000000002l-3.400 3.400" stroke="#2a3ae0" stroke-width="0.800"/><path d="M263.2 158.60000000000002l3.400 3.400M266.59999999999997 158.60000000000002l-3.400 3.400" stroke="#2a3ae0" stroke-width="0.800"/><path d="M209.60000000000002 198.60000000000002l3.400 3.400M213.0 198.60000000000002l-3.400 3.400" stroke="#2a3ae0" stroke-width="0.800"/><path d="M212.5 284.5l3.400 3.400M215.89999999999998 284.5l-3.400 3.400" stroke="#2a3ae0" stroke-width="0.800"/><rect x="158.1" y="207.9" width="5.400" height="5.400" fill="#0ae60a" stroke="#0a4a0a" stroke-width="0.900"/><rect x="158.1" y="283.2" width="5.400" height="5.400" fill="#0ae60a" stroke="#0a4a0a" stroke-width="0.900"/><rect x="158.1" y="358.59999999999997" width="5.400" height="5.400" fill="#0ae60a" stroke="#0a4a0a" stroke-width="0.900"/><rect x="211.29999999999998" y="207.9" width="5.400" height="5.400" fill="#0ae60a" stroke="#0a4a0a" stroke-width="0.900"/><rect x="211.29999999999998" y="358.59999999999997" width="5.400" height="5.400" fill="#0ae60a" stroke="#0a4a0a" stroke-width="0.900"/><rect x="264.5" y="207.9" width="5.400" height="5.400" fill="#0ae60a" stroke="#0a4a0a" stroke-width="0.900"/><rect x="264.5" y="283.2" width="5.400" height="5.400" fill="#0ae60a" stroke="#0a4a0a" stroke-width="0.900"/><rect x="264.5" y="358.59999999999997" width="5.400" height="5.400" fill="#0ae60a" stroke="#0a4a0a" stroke-width="0.900"/><circle cx="214.200" cy="192.500" r="2.700" fill="#12e012" stroke="#0a5a0a" stroke-width="0.800"/><path d="M214 255.400l2.400 2.400-2.400 2.400-2.400-2.400z" fill="#f6e61a" stroke="#6a6a0a" stroke-width="0.600"/></svg>
<div style="left:130.8px;top:379.6px;width:152px;height:22.4px;background:#f0f0f0;"></div>
<div style="left:141px;top:380.4px;width:141px;height:8px;background:#f0f0f0;"></div>
<div style="left:164.4px;top:380.6px;width:118px;height:7.6px;background:#c6c6c6;"></div>
<svg style="left:143px;top:380.4px" width="8" height="8" viewBox="0 0 8 8" preserveAspectRatio="none"><path d="M4.800 1.600L2.400 4l2.400 2.400" stroke="#222" stroke-width="1.200" fill="none"/></svg>
<div style="left:132px;top:390.4px;width:25.6px;height:11.2px;background:#eef5fd;border:1px solid #5a9ae0;"></div>
<span class="t" style="left:44.80000000000001px;width:200px;text-align:center;top:391.7px;font-size:6.7px;color:#222;">Page-1</span>
<span class="t" style="left:164.6px;top:391.7px;font-size:6.7px;color:#222;">All</span>
<svg style="left:173.6px;top:394px" width="5" height="4" viewBox="0 0 5 4" preserveAspectRatio="none"><path d="M0.400 3.400h4L2.400 0.800z" fill="#222"/></svg>
<svg style="left:185.5px;top:391px" width="10" height="10" viewBox="0 0 10 10" preserveAspectRatio="none"><circle cx="5" cy="5" r="4.500" fill="#2a9a6a"/><path d="M2.400 5h5.200M5 2.400v5.200" stroke="#fff" stroke-width="1.300"/></svg>
<span class="t" style="left:199px;top:391.7px;font-size:6.7px;color:#222;">Add</span>
<div style="left:588px;top:90px;width:12px;height:313px;background:#f6f6f6;"></div>
<div style="left:590.4px;top:101px;width:8.2px;height:290px;background:#f0f0f0;"></div>
<div style="left:590.6px;top:116px;width:7.6px;height:107px;background:#c8c8c8;"></div>
<svg style="left:590px;top:101.5px" width="9" height="8" viewBox="0 0 9 8" preserveAspectRatio="none"><path d="M2.200 5.600l2.400-2.400 2.400 2.400" stroke="#222" stroke-width="1.200" fill="none"/></svg>
<svg style="left:590px;top:370px" width="9" height="8" viewBox="0 0 9 8" preserveAspectRatio="none"><path d="M2.200 2.800l2.400 2.400 2.400-2.400" stroke="#222" stroke-width="1.200" fill="none"/></svg>
<div style="left:281px;top:26.8px;width:307px;height:372.4px;background:#f0f0f0;border:1px solid #d9d9d9;box-shadow:0 0 2px rgba(0,0,0,0.180);"></div>
<div style="left:282.4px;top:27.8px;width:304.2px;height:17.4px;background:#e9e9e9;"></div>
<div style="left:282.4px;top:45px;width:304.2px;height:0.8px;background:#dadada;"></div>
<span class="t" style="left:288px;top:32.2px;font-size:9.15px;color:#2a2a2a;-webkit-text-stroke:0.150px #2a2a2a;">Group Editor</span>
<div style="left:555.8px;top:27px;width:28px;height:12.4px;background:#f0969a;"></div>
<svg style="left:565.8px;top:30.6px" width="8" height="7" viewBox="0 0 8 7" preserveAspectRatio="none"><path d="M1.600 1l4.400 4.400M6 1L1.600 5.400" stroke="#fff" stroke-width="1.100"/></svg>
<div style="left:281.2px;top:46px;width:6.6px;height:350px;background:linear-gradient(90deg,#d4d4d4,#efefef);"></div>
<div style="left:287.8px;top:47.4px;width:108px;height:308px;background:#fff;border:1px solid #d2d2d2;border-left:1px solid #ececec;"></div>
<svg style="left:289.6px;top:49.6px" width="5" height="5" viewBox="0 0 5 5" preserveAspectRatio="none"><path d="M0.800 4h3.200V0.800z" fill="#444"/></svg>
<span class="t" style="left:296.7px;top:46.900000000000006px;font-size:6.7px;color:#222;">Group 1 - Can</span>
<svg style="left:300px;top:57.6px" width="5" height="6" viewBox="0 0 5 6" preserveAspectRatio="none"><path d="M0.800 0.400l3.400 2.600-3.400 2.600z" fill="#fff" stroke="#777" stroke-width="0.700"/></svg>
<span class="t" style="left:305.6px;top:56.1px;font-size:6.7px;color:#222;">C</span>
<svg style="left:300px;top:66.8px" width="5" height="6" viewBox="0 0 5 6" preserveAspectRatio="none"><path d="M0.800 0.400l3.400 2.600-3.400 2.600z" fill="#fff" stroke="#777" stroke-width="0.700"/></svg>
<span class="t" style="left:305.6px;top:65.3px;font-size:6.7px;color:#222;">F</span>
<svg style="left:299px;top:76.2px" width="5" height="5" viewBox="0 0 5 5" preserveAspectRatio="none"><path d="M0.800 4h3.200V0.800z" fill="#444"/></svg>
<span class="t" style="left:305.2px;top:74.10000000000001px;font-size:6.7px;color:#222;">S</span>
<div style="left:398.3px;top:47.6px;width:30px;height:14px;background:#f0f0f0;border:1px solid #c4c4c4;"></div>
<span class="t" style="left:313px;width:200px;text-align:center;top:49.7px;font-size:6.7px;color:#222;">General</span>
<div style="left:428.6px;top:46.8px;width:42px;height:16px;background:#fff;border:1px solid #c4c4c4;"></div>
<span class="t" style="left:349.6px;width:200px;text-align:center;top:49.7px;font-size:6.7px;color:#222;">Appearance</span>
<div style="left:398.3px;top:60.6px;width:185px;height:318px;background:#f4f4f4;border:1px solid #cfcfcf;"></div>
<svg style="left:291px;top:360px" width="9" height="9" viewBox="0 0 9 9" preserveAspectRatio="none"><path d="M4.400 0.800v7.200M0.800 4.400h7.200" stroke="#2a9a6a" stroke-width="1.800"/></svg>
<svg style="left:305.2px;top:360.8px" width="8" height="8" viewBox="0 0 8 8" preserveAspectRatio="none"><path d="M1 1l5.200 5.600M6.200 1L1 6.600" stroke="#d0200e" stroke-width="1.800"/></svg>
<svg style="left:291px;top:360px" width="9" height="9" viewBox="0 0 9 9" preserveAspectRatio="none"><path d="M4.400 0.800v7.200M0.800 4.400h7.200" stroke="#2a9a6a" stroke-width="1.800"/></svg>
<svg style="left:305.2px;top:360.8px" width="8" height="8" viewBox="0 0 8 8" preserveAspectRatio="none"><path d="M1 1l5.200 5.600M6.200 1L1 6.600" stroke="#d0200e" stroke-width="1.800"/></svg>
<div style="left:523px;top:384px;width:24px;height:8.6px;background:#eeeeee;border:1px solid #dedede;"></div>
<div style="left:552px;top:384px;width:24.5px;height:8.6px;background:#eeeeee;border:1px solid #dedede;"></div>
<div style="left:282px;top:393.6px;width:305px;height:0.8px;background:#dedede;"></div>
<div style="left:308.8px;top:56px;width:277.2px;height:332.2px;background:#8ccbfb;border:1px solid #4c9ce2;"></div>
<div style="left:313.2px;top:73.7px;width:267.2px;height:310px;background:#f0f0f0;border:1px solid #f6faff;border-top:0.800px solid #5fa2dc;"></div>
<span class="t" style="left:315.8px;top:60.60000000000001px;font-size:9.15px;color:#0e2c4a;-webkit-text-stroke:0.250px #0e2c4a;">Fill Editor</span>
<div style="left:552.8px;top:56.2px;width:27.7px;height:12px;background:#cb4747;"></div>
<svg style="left:562.8px;top:59px" width="8" height="7" viewBox="0 0 8 7" preserveAspectRatio="none"><path d="M1.600 1l4.400 4.400M6 1L1.600 5.400" stroke="#fff" stroke-width="1.100"/></svg>
<span class="t" style="left:315.5px;top:77.3px;font-size:6.7px;color:#222;">Type:</span>
<div style="left:331.6px;top:76.6px;width:155px;height:10.6px;background:#fff;border:1px solid #c2c2c2;border-radius:1px;"></div>
<span class="t" style="left:334px;top:77.3px;font-size:6.7px;color:#222;">Stock Gradient Fill</span>
<svg style="left:477px;top:79px" width="7" height="6" viewBox="0 0 7 6" preserveAspectRatio="none"><path d="M1 1.400l2.400 2.400 2.400-2.400" stroke="#222" stroke-width="1.100" fill="none"/></svg>
<div style="left:316px;top:96px;width:170.6px;height:39.4px;border:1px solid #e2e2e2;"></div>
<div style="left:318px;top:91px;width:21.5px;height:10px;background:#f0f0f0;"></div>
<span class="t" style="left:319px;top:91.9px;font-size:6.7px;color:#222;">Colors</span>
<span class="t" style="left:319px;top:106.2px;font-size:6.7px;color:#222;">Begin Color:</span>
<div style="left:359.6px;top:105px;width:122px;height:11px;background:#fff;border:1px solid #c2c2c2;"></div>
<div style="left:362px;top:107px;width:108px;height:7px;background:#48d1cc;"></div>
<svg style="left:473px;top:108px" width="7" height="6" viewBox="0 0 7 6" preserveAspectRatio="none"><path d="M1 1.400l2.400 2.400 2.400-2.400" stroke="#222" stroke-width="1.100" fill="none"/></svg>
<span class="t" style="left:324.6px;top:121.4px;font-size:6.7px;color:#222;">End Color:</span>
<div style="left:359.6px;top:120.2px;width:122px;height:11px;background:#fff;border:1px solid #c2c2c2;"></div>
<div style="left:362px;top:122.2px;width:108px;height:7px;background:#20b2aa;"></div>
<svg style="left:473px;top:123.2px" width="7" height="6" viewBox="0 0 7 6" preserveAspectRatio="none"><path d="M1 1.400l2.400 2.400 2.400-2.400" stroke="#222" stroke-width="1.100" fill="none"/></svg>
<div style="left:315.8px;top:148.2px;width:65px;height:101.4px;border:1px solid #e2e2e2;"></div>
<div style="left:318px;top:143px;width:17px;height:10px;background:#f0f0f0;"></div>
<span class="t" style="left:319.5px;top:143.2px;font-size:6.7px;color:#222;">Style</span>
<svg style="left:319.3px;top:157.4px" width="10" height="10" viewBox="0 0 10 10" preserveAspectRatio="none"><circle cx="5" cy="5" r="4.200" fill="#fff" stroke="#8a8a8a" stroke-width="0.700"/></svg>
<span class="t" style="left:330.8px;top:158.29999999999998px;font-size:6.7px;color:#222;">Horizontal</span>
<svg style="left:319.3px;top:171.92000000000002px" width="10" height="10" viewBox="0 0 10 10" preserveAspectRatio="none"><circle cx="5" cy="5" r="4.200" fill="#fff" stroke="#8a8a8a" stroke-width="0.700"/><circle cx="5" cy="5" r="2.200" fill="#111"/></svg>
<span class="t" style="left:330.8px;top:172.82px;font-size:6.7px;color:#222;">Vertical</span>
<svg style="left:319.3px;top:186.44px" width="10" height="10" viewBox="0 0 10 10" preserveAspectRatio="none"><circle cx="5" cy="5" r="4.200" fill="#fff" stroke="#8a8a8a" stroke-width="0.700"/></svg>
<span class="t" style="left:330.8px;top:187.33999999999997px;font-size:6.7px;color:#222;">Diagonal Up</span>
<svg style="left:319.3px;top:200.96px" width="10" height="10" viewBox="0 0 10 10" preserveAspectRatio="none"><circle cx="5" cy="5" r="4.200" fill="#fff" stroke="#8a8a8a" stroke-width="0.700"/></svg>
<span class="t" style="left:330.8px;top:201.85999999999999px;font-size:6.7px;color:#222;">Diagonal Down</span>
<svg style="left:319.3px;top:215.48000000000002px" width="10" height="10" viewBox="0 0 10 10" preserveAspectRatio="none"><circle cx="5" cy="5" r="4.200" fill="#fff" stroke="#8a8a8a" stroke-width="0.700"/></svg>
<span class="t" style="left:330.8px;top:216.38px;font-size:6.7px;color:#222;">From Corner</span>
<svg style="left:319.3px;top:230.0px" width="10" height="10" viewBox="0 0 10 10" preserveAspectRatio="none"><circle cx="5" cy="5" r="4.200" fill="#fff" stroke="#8a8a8a" stroke-width="0.700"/></svg>
<span class="t" style="left:330.8px;top:230.89999999999998px;font-size:6.7px;color:#222;">From Center</span>
<div style="left:385.3px;top:148.2px;width:100.6px;height:104.4px;border:1px solid #e2e2e2;"></div>
<div style="left:387.6px;top:143px;width:24.5px;height:10px;background:#f0f0f0;"></div>
<span class="t" style="left:389.5px;top:143.2px;font-size:6.7px;color:#222;">Variant</span>
<div style="left:436.2px;top:204.4px;width:46.8px;height:45.4px;background:#e6f1fc;border:1px solid #8cbcf0;"></div>
<div style="left:389.8px;top:157.8px;width:42.8px;height:42.2px;border:1px solid #999;background:linear-gradient(90deg,#48d1cc,#20b2aa);"></div>
<div style="left:438.2px;top:157.8px;width:42.8px;height:42.2px;border:1px solid #999;background:linear-gradient(90deg,#20b2aa,#48d1cc);"></div>
<div style="left:389.8px;top:206px;width:42.8px;height:42.2px;border:1px solid #999;background:linear-gradient(90deg,#48d1cc,#20b2aa,#48d1cc);"></div>
<div style="left:438.2px;top:206px;width:42.8px;height:42.2px;border:1px solid #999;background:linear-gradient(90deg,#20b2aa,#48d1cc,#20b2aa);"></div>
<div style="left:491.6px;top:84.4px;width:84.6px;height:90.2px;border:1px solid #e2e2e2;"></div>
<div style="left:493px;top:79.4px;width:27px;height:10px;background:#f0f0f0;"></div>
<span class="t" style="left:494px;top:80.2px;font-size:6.7px;color:#222;">Preview</span>
<svg style="left:494px;top:93px" width="78" height="77" viewBox="0 0 78 77" preserveAspectRatio="none"><defs><pattern id="ck" width="4.400" height="4.400" patternUnits="userSpaceOnUse"><rect width="4.400" height="4.400" fill="#fff"/><rect width="2.200" height="2.200" fill="#c6c6c6"/><rect x="2.200" y="2.200" width="2.200" height="2.200" fill="#c6c6c6"/></pattern></defs><rect x="0.400" y="0.400" width="77.200" height="76.200" fill="url(#ck)" stroke="#bdbdbd" stroke-width="0.800"/></svg>
<div style="left:498.9px;top:98.2px;width:67.4px;height:66.8px;border-radius:6.500px;border:0.600px solid #3a8a86;background:linear-gradient(90deg,#20b2aa,#48d1cc,#20b2aa);"></div>
<div style="left:520px;top:366px;width:26px;height:12.8px;background:linear-gradient(#ededed,#e2e2e2);border:1px solid #bdbdbd;"></div>
<span class="t" style="left:433px;width:200px;text-align:center;top:368.09999999999997px;font-size:6.7px;color:#222;">OK</span>
<div style="left:549.4px;top:366px;width:26.8px;height:12.8px;background:linear-gradient(#ededed,#e2e2e2);border:1px solid #bdbdbd;"></div>
<span class="t" style="left:462.79999999999995px;width:200px;text-align:center;top:368.09999999999997px;font-size:6.7px;color:#222;">Cancel</span>
</div></body></html>
